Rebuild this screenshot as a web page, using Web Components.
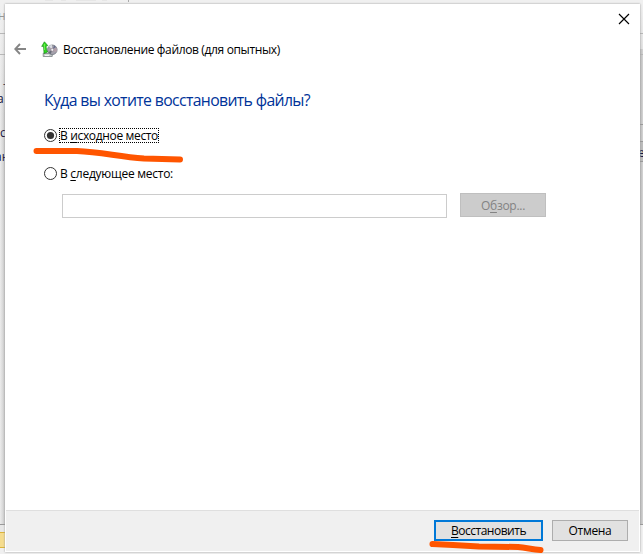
<!DOCTYPE html>
<html lang="ru"><head><meta charset="utf-8"><title>Восстановление файлов</title>
<style>html,body{margin:0;width:643px;height:554px;overflow:hidden;font:12px "Open Sans","Noto Sans",sans-serif;color:#000}</style></head>
<body><restore-screen></restore-screen>
<script>
const define=(name,html,setup)=>customElements.define(name,class extends HTMLElement{
  connectedCallback(){
    if(this.shadowRoot)return;
    const t=document.createElement('template');t.innerHTML=html;
    this.attachShadow({mode:'open'}).append(t.content.cloneNode(true));
    if(setup)setup(this,this.shadowRoot);
  }
});

// Text label whose tracking is tuned to a given advance width
define('ui-label',`<style>:host{display:block;white-space:nowrap;width:max-content}span{display:inline-block}</style><span><slot></slot></span>`,(el,root)=>{
  const s=root.querySelector('span'),w=+el.getAttribute('fit');
  const n=el.textContent.length;
  s.style.letterSpacing=((w-s.getBoundingClientRect().width)/n).toFixed(3)+'px';
});

define('back-windows',`<style>:host{display:block;width:643px;height:554px}svg{display:block}text{font:12px "Open Sans","Noto Sans",sans-serif;fill:#151540}</style>
<svg width="643" height="554" viewBox="0 0 643 554">
<defs><linearGradient id="l"><stop stop-color="#ececec"/><stop offset="1" stop-color="#c9c9c9"/></linearGradient>
<linearGradient id="r"><stop stop-color="#bdbdbd"/><stop offset="1" stop-color="#d4d4d4"/></linearGradient>
<linearGradient id="fade" x2="0" y2="1"><stop stop-color="#f0f0f0"/><stop offset="1" stop-color="#f0f0f0" stop-opacity="0"/></linearGradient></defs>
<path fill="#f0f0f0" d="M0 0h643v554H0z"/><path fill="url(#l)" d="M0 4h5v520H0z"/><path fill="url(#r)" d="M640 4h3v520h-3z"/>
<path fill="url(#fade)" d="M0 4h5v110H0zM640 4h3v45h-3z"/>
<path fill="#aaa" d="M128 0h1v2h-1z"/><path fill="#e6e6e6" d="M45 0h8v1h-8zM61 0h5v1h-5zM76 0h20v1H76zM102 0h5v1h-5z"/>
<path fill="#b7b7b7" d="M0 33h5v1H0zM0 54h5v1H0zM640 33h3v1h-3zM640 54h3v1h-3z"/>
<path fill="#999" d="M640 124h3v1h-3zM640 141h3v1h-3zM640 161h3v1h-3zM0 524h5v1H0zM640 524h3v1h-3z"/>
<path fill="#bcbcbc" d="M640 142h3v19h-3z"/>
<path fill="#e7e7e7" d="M0 525h5v7H0z"/><path fill="#f5dc8e" d="M0 532h5v16H0z"/><path fill="#dcb439" d="M0 532h5v1H0zM0 547h5v1H0z"/>
<text x="-2" y="20" style="fill:#999">н</text><text x="3" y="88">-</text><text x="-3" y="103">а</text><text x="0" y="137">с</text><text x="-5" y="161">ан</text><text x="638" y="157">е</text>
</svg>`);

define('title-bar',`<style>:host{display:block;height:87px}.top{display:flex;justify-content:flex-end;height:27px;padding:9px 10px 0 0;box-sizing:border-box}
.line{display:flex;align-items:center;height:36px}.back{margin-left:9px}.ic{margin-left:14px;margin-right:5px}svg{display:block}</style>
<div class="top"><svg width="12" height="12" viewBox="0 0 12 12"><path d="M1 1l10 10M11 1L1 11" stroke="#000" stroke-width="1.15"/></svg></div>
<div class="line"><svg class="back" width="13" height="12" viewBox="0 0 13 12"><path d="M6 1L1.2 6 6 11M1.5 6H12" fill="none" stroke="#858585" stroke-width="1.9"/></svg>
<svg class="ic" width="17" height="17" viewBox="0 0 17 17"><path d="M2.2 12.5l2-2.3h9l-2 4.3z" fill="#eef1f1" stroke="#9da6a8" stroke-width=".7"/><path d="M2.2 12.5h9v3h-9z" fill="#c8cdcd" stroke="#7d8586" stroke-width=".8"/><path d="M4 14.3h4" stroke="#fff"/><circle cx="11.3" cy="8.8" r="4.8" fill="#a4a1ac" stroke="#737a83" stroke-width=".8"/><path d="M11.3 8.8L8 5.3a4.8 4.8 0 0 1 3-1.2z" fill="#dadde3"/><path d="M11.3 8.8l4.2-2.2a4.8 4.8 0 0 1-.4 5z" fill="#b3a0aa"/><path d="M11.3 8.8l-3.9 2.4 2.3 2z" fill="#666d78"/><path d="M11.3 8.8l2-4.2 1.6 1.3z" fill="#686d8c"/><circle cx="11.3" cy="8.8" r="1.5" fill="#edf2f5" stroke="#8b7580" stroke-width=".6"/><path d="M3.1 12.4L2.5 5.3.7 5.4 3.4.8l3.4 3.8-1.7.3c.1 2.4.4 4.6 1.5 6.1z" fill="#32db20" stroke="#188d17" stroke-width=".7"/><path d="M3.4 3v6" stroke="#a3ff80" stroke-width=".6"/></svg>
<ui-label fit="217">Восстановление файлов (для опытных)</ui-label></div>`);

define('radio-option',`<style>:host{display:flex;height:17px;align-items:center;gap:2px}svg{display:block;flex:none}
.box{box-sizing:border-box;height:15px;border:1px dotted transparent;display:flex;align-items:center}:host([checked]) .box{border-color:#000}circle.dot{display:none}:host([checked]) .dot{display:block}</style>
<svg width="13" height="13" viewBox="0 0 13 13"><circle cx="6.5" cy="6.5" r="6" fill="#fff" stroke="#333" stroke-width="1"/><circle class="dot" cx="6.5" cy="6.5" r="3.6" fill="#333"/></svg><div class="box"><slot></slot></div>`);

define('push-button',`<style>:host{display:flex;box-sizing:border-box;align-items:center;justify-content:center;background:#e1e1e1;border:1px solid #adadad;height:21px}:host([primary]){border:2px solid #0078d7}:host([disabled]){background:#ccc;border-color:#bfbfbf;color:#838383}</style><slot></slot>`);

define('path-field',`<style>:host{display:block;box-sizing:border-box;width:385px;height:24px;border:1px solid #ccc;background:#fff}</style>`);

define('restore-dialog',`<style>:host{display:flex;flex-direction:column;background:#fff;box-shadow:0 0 2px #999}
main{flex:1;padding:0 0 0 39px}h1{margin:0;height:36px;font-size:15.8px;line-height:19px;font-weight:400;color:#003399}u{text-decoration-thickness:1px;text-underline-offset:2px}
.place{display:flex;gap:13px;margin-top:12px;padding-left:18px}.place push-button{width:86px;height:24px;margin-top:-1px}radio-option+radio-option{margin-top:21px}
footer{height:41px;margin:0 1px 1px;border-top:1px solid #dfdfdf;background:#f0f0f0;box-sizing:border-box;display:flex;justify-content:flex-end;gap:9px;padding:9px 11px 0 0}footer push-button:first-child{width:109px}footer push-button:last-child{width:76px}</style>
<title-bar></title-bar><main><h1><ui-label fit="266">Куда вы хотите восстановить файлы?</ui-label></h1>
<radio-option checked><ui-label fit="98">В <u>и</u>сходное место</ui-label></radio-option><radio-option><ui-label fit="113">В <u>с</u>ледующее место:</ui-label></radio-option>
<div class="place"><path-field></path-field><push-button disabled><ui-label fit="44">О<u>б</u>зор...</ui-label></push-button></div></main>
<footer><push-button primary><ui-label fit="75"><u>В</u>осстановить</ui-label></push-button><push-button><ui-label fit="43">Отмена</ui-label></push-button></footer>`);

define('marker-strokes',`<style>:host{display:block}svg{display:block}</style><svg width="643" height="554" viewBox="0 0 643 554" fill="none" stroke="#ff5500" stroke-linecap="round" stroke-linejoin="round"><path stroke-width="6" d="M36.5 151H77C102 152 119 157 144 158.5L180 159.5"/><path stroke-width="6" d="M432.5 544L453 545L479 546.5L518 547C526 547.5 532 549.5 540.5 550"/></svg>`);

define('restore-screen',`<style>:host{display:grid;position:relative;width:643px;height:554px;grid-template:4px 548px 2px/5px 635px 3px;overflow:hidden}back-windows,marker-strokes{position:absolute;inset:0;pointer-events:none}restore-dialog{grid-area:2/2;position:relative}</style><back-windows></back-windows><restore-dialog></restore-dialog><marker-strokes></marker-strokes>`);
</script></body></html>
